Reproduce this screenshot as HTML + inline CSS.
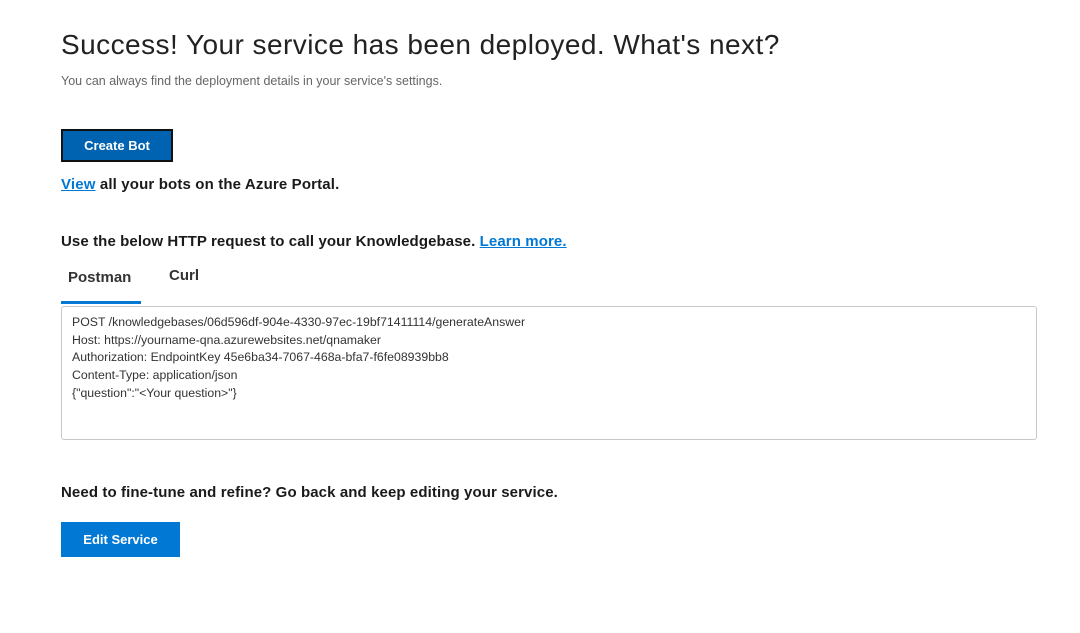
<!DOCTYPE html>
<html><head><meta charset="utf-8"><style>
body{margin:0;width:1080px;height:633px;background:#fff;font-family:"Liberation Sans",sans-serif;color:#1a1a1a;position:relative;overflow:hidden}
.a{position:absolute;white-space:nowrap;line-height:1}
.btn{position:absolute;color:#fff;font-weight:bold;font-size:13px;display:flex;align-items:center;justify-content:center;box-sizing:border-box}
a{color:#0078d4;text-decoration:underline}
</style></head><body>
<div class="a" style="left:61px;top:31px;font-size:28px;color:#222;letter-spacing:0.45px">Success! Your service has been deployed. What's next?</div>
<div class="a" style="left:61px;top:75px;font-size:12.5px;color:#666">You can always find the deployment details in your service's settings.</div>
<div class="btn" style="left:61px;top:129px;width:112px;height:33px;background:#0063b1;border:2px solid #111">Create Bot</div>
<div class="a" style="left:61px;top:177px;font-size:15px;font-weight:bold;letter-spacing:0.15px"><a>View</a> all your bots on the Azure Portal.</div>
<div class="a" style="left:61px;top:234px;font-size:15px;font-weight:bold;letter-spacing:0.1px">Use the below HTTP request to call your Knowledgebase. <a>Learn more.</a></div>
<div class="a" style="left:68px;top:270px;font-size:15px;font-weight:bold;color:#333">Postman</div>
<div class="a" style="left:169px;top:268px;font-size:15px;font-weight:bold;color:#333">Curl</div>
<div style="position:absolute;left:61px;top:301px;width:80px;height:3px;background:#0078d4"></div>
<div style="position:absolute;left:61px;top:306px;width:976px;height:134px;border:1px solid #c8c8c8;border-radius:3px;box-sizing:border-box"></div>
<div class="a" style="left:72px;top:314px;font-size:12.3px;color:#333;line-height:17.7px">POST /knowledgebases/06d596df-904e-4330-97ec-19bf71411114/generateAnswer<br>Host: https://yourname-qna.azurewebsites.net/qnamaker<br>Authorization: EndpointKey 45e6ba34-7067-468a-bfa7-f6fe08939bb8<br>Content-Type: application/json<br>{"question":"&lt;Your question&gt;"}</div>
<div class="a" style="left:61px;top:485px;font-size:15px;font-weight:bold;letter-spacing:0.1px">Need to fine-tune and refine? Go back and keep editing your service.</div>
<div class="btn" style="left:61px;top:522px;width:119px;height:35px;background:#0078d4">Edit Service</div>
</body></html>
